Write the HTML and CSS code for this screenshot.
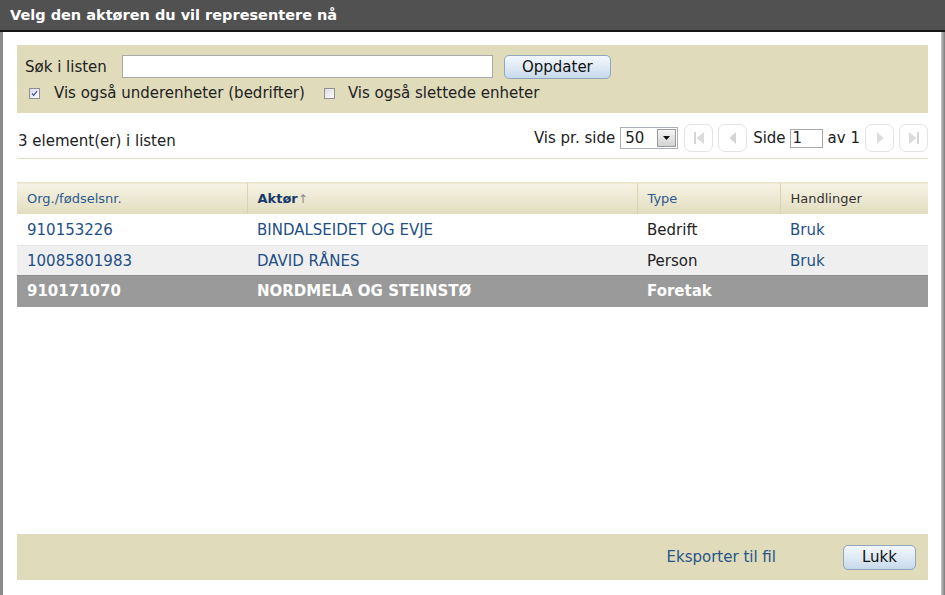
FILE: index.html
```html
<!DOCTYPE html>
<html lang="no">
<head>
<meta charset="utf-8">
<title>Velg aktør</title>
<link rel="stylesheet" href="styles.css">
</head>
<body>
<div class="window">
  <div class="titlebar">Velg den aktøren du vil representere nå</div>
  <div class="frame">
    <div class="edge-left"></div>
    <div class="dialog">
      <div class="filter">
        <div class="filter-row">
          <label class="search-label">Søk i listen</label>
          <input class="search-input" type="text">
          <button class="btn btn-update">Oppdater</button>
        </div>
        <div class="filter-row checks">
          <span class="check checked"><svg viewBox="0 0 11 11" width="11" height="11"><path d="M2.5 5.5 L4.5 7.8 L8.6 2.6" fill="none" stroke="#3b4fa8" stroke-width="1.4"/></svg></span>
          <span class="check-label">Vis også underenheter (bedrifter)</span>
          <span class="check second"></span>
          <span class="check-label">Vis også slettede enheter</span>
        </div>
      </div>

      <div class="pager-row">
        <span class="count">3 element(er) i listen</span>
        <div class="pager">
          <span class="pp-label">Vis pr. side</span>
          <span class="select"><span class="select-val">50</span><span class="select-btn"><svg viewBox="0 0 7 4" width="7" height="4"><path d="M0 0 H7 L3.5 4 Z" fill="#111"/></svg></span></span>
          <span class="pbtn"><svg viewBox="0 0 14 16" width="14" height="16"><rect x="2" y="2" width="2" height="12" fill="#d6d6d6"/><path d="M12 2 L4.5 8 L12 14 Z" fill="#dcdcdc"/></svg></span>
          <span class="pbtn"><svg viewBox="0 0 14 16" width="14" height="16"><path d="M10 2 L3.5 8 L10 14 Z" fill="#d4d4d4"/></svg></span>
          <span class="side">Side</span>
          <span class="page-input">1</span>
          <span class="av">av 1</span>
          <span class="pbtn"><svg viewBox="0 0 14 16" width="14" height="16"><path d="M4 2 L10.5 8 L4 14 Z" fill="#dcdcdc"/></svg></span>
          <span class="pbtn"><svg viewBox="0 0 14 16" width="14" height="16"><path d="M2 2 L9.5 8 L2 14 Z" fill="#dcdcdc"/><rect x="10" y="2" width="2" height="12" fill="#d6d6d6"/></svg></span>
        </div>
      </div>
      <div class="sep"></div>

      <div class="table-area">
        <table class="grid">
          <colgroup><col class="c1"><col class="c2"><col class="c3"><col class="c4"></colgroup>
          <thead>
            <tr>
              <th class="h-link">Org./fødselsnr.</th>
              <th class="h-sorted">Aktør<span class="arrow">↑</span></th>
              <th class="h-link">Type</th>
              <th class="h-plain">Handlinger</th>
            </tr>
          </thead>
          <tbody>
            <tr class="r1">
              <td class="link">910153226</td>
              <td class="link">BINDALSEIDET OG EVJE</td>
              <td>Bedrift</td>
              <td class="link">Bruk</td>
            </tr>
            <tr class="r2">
              <td class="link">10085801983</td>
              <td class="link">DAVID RÅNES</td>
              <td>Person</td>
              <td class="link">Bruk</td>
            </tr>
            <tr class="r3">
              <td>910171070</td>
              <td>NORDMELA OG STEINSTØ</td>
              <td>Foretak</td>
              <td></td>
            </tr>
          </tbody>
        </table>
      </div>

      <div class="footer">
        <span class="export">Eksporter til fil</span>
        <button class="btn btn-close">Lukk</button>
      </div>
    </div>
    <div class="edge-right"></div>
  </div>
</div>
</body>
</html>
```

FILE: styles.css
```css
html, body {
  margin: 0;
  padding: 0;
  background: #8c8c8c;
}
body {
  font-family: "DejaVu Sans", Verdana, sans-serif;
  color: #222;
}
.window {
  width: 945px;
  height: 595px;
  display: flex;
  flex-direction: column;
  overflow: hidden;
}
.titlebar {
  height: 30px;
  background: #515151;
  border-bottom: 2px solid #151515;
  color: #fff;
  font-weight: bold;
  font-size: 14.5px;
  line-height: 31px;
  padding-left: 10px;
  flex: none;
}
.frame {
  flex: 1;
  display: flex;
  min-height: 0;
}
.edge-left {
  width: 3px;
  background: #8a8a8a;
  flex: none;
}
.edge-right {
  width: 4px;
  background: linear-gradient(to right, #c8c8c8, #7a7a7a);
  flex: none;
}
.dialog {
  flex: 1;
  background: #fff;
  padding: 13px 13px 15px 14px;
  display: flex;
  flex-direction: column;
  min-width: 0;
}
.filter {
  background: #dfdbbb;
  height: 68px;
  box-sizing: border-box;
  padding: 9px 0 0 8px;
  display: flex;
  flex-direction: column;
  gap: 3px;
}
.filter-row {
  display: flex;
  align-items: center;
  font-size: 15px;
  white-space: nowrap;
}
.search-label {
  flex: none;
  margin-right: 15px;
}
.search-input {
  width: 371px;
  height: 23px;
  box-sizing: border-box;
  border: 1px solid #a9a9a9;
  background: #fff;
  margin: 0 11px 0 0;
  padding: 0;
  flex: none;
}
.btn {
  font-family: "DejaVu Sans", Verdana, sans-serif;
  font-size: 15px;
  color: #111;
  border: 1px solid #8ea7bf;
  border-radius: 5px;
  background: linear-gradient(to bottom, #f2f7fc 0%, #dfeaf5 50%, #c7d9ea 100%);
  box-sizing: border-box;
  padding: 0;
  cursor: pointer;
  flex: none;
}
.btn-update {
  width: 107px;
  height: 24px;
  margin-top: 1px;
}
.checks {
  height: 22px;
  padding-left: 4px;
}
.check {
  width: 11px;
  height: 11px;
  box-sizing: border-box;
  border: 1px solid #8f8f8f;
  background: linear-gradient(to bottom right, #dcdcdc, #fbfbfb);
  display: inline-flex;
  align-items: center;
  justify-content: center;
  margin-right: 14px;
  flex: none;
}
.check svg {
  width: 9px;
  height: 9px;
}
.check.checked {
  background: linear-gradient(to bottom right, #d6dbe6, #fafbfd);
}
.check.second {
  margin-left: 19px;
  margin-right: 13px;
}
.pager-row {
  display: flex;
  justify-content: space-between;
  align-items: center;
  height: 28px;
  margin-top: 11px;
  font-size: 15px;
  white-space: nowrap;
}
.count {
  padding-left: 1px;
  margin-top: 5px;
}
.pager {
  display: flex;
  align-items: center;
}
.pp-label {
  margin-right: 5px;
}
.select {
  display: inline-flex;
  align-items: center;
  width: 58px;
  height: 22px;
  box-sizing: border-box;
  border: 1px solid #a9b0b8;
  background: #fff;
  margin-right: 6px;
}
.select-val {
  flex: 1;
  padding-left: 4px;
}
.select-btn {
  width: 19px;
  height: 18px;
  margin-right: 1px;
  box-sizing: border-box;
  border: 1px solid #9a9a9a;
  background: linear-gradient(to bottom, #f5f5f5, #d2d2d2);
  display: inline-flex;
  align-items: center;
  justify-content: center;
}
.pbtn {
  width: 29px;
  height: 28px;
  box-sizing: border-box;
  border: 1px solid #e3e3e3;
  border-radius: 7px;
  background: #fff;
  display: inline-flex;
  align-items: center;
  justify-content: center;
  margin-right: 5px;
}
.pbtn:last-child {
  margin-right: 0;
}
.side {
  margin: 0 4px 0 1px;
}
.page-input {
  width: 33px;
  height: 19px;
  box-sizing: border-box;
  border: 1px solid #a9a9a9;
  line-height: 17px;
  padding-left: 2px;
  margin-right: 5px;
}
.av {
  margin-right: 5px;
}
.sep {
  height: 1px;
  background: #e4e0c8;
  margin-top: 6px;
}
.table-area {
  flex: 1;
  padding-top: 23px;
}
.grid {
  width: 911px;
  border-collapse: collapse;
  table-layout: fixed;
}
.c1 { width: 230px; }
.c2 { width: 390px; }
.c3 { width: 143px; }
.c4 { width: 148px; }
.grid th {
  height: 31px;
  box-sizing: border-box;
  text-align: left;
  font-size: 13px;
  font-weight: normal;
  padding: 0 0 0 10px;
  background: linear-gradient(to bottom, #f6f3e5 0%, #ece8d2 50%, #e2ddbe 100%);
  border-top: 1px solid #e8e3c9;
  border-left: 1px solid #d9d3b4;
}
.grid th:first-child {
  border-left: none;
}
.h-link {
  color: #2c5a8e;
}
.h-sorted {
  color: #1a3a6c;
  font-weight: bold !important;
}
.arrow {
  color: #8a8a8a;
  font-weight: normal;
  font-size: 12px;
}
.h-plain {
  color: #333;
}
.grid td {
  font-size: 15px;
  height: 31px;
  padding: 0 0 0 10px;
  box-sizing: border-box;
  white-space: nowrap;
  color: #222;
}
.grid td.link {
  color: #1f4f87;
}
.r1 td { background: #fff; height: 32px; padding-top: 2px; }
.r2 td { background: #efefef; border-top: 1px solid #e6e6e6; height: 30px; }
.r3 td {
  background: #9a9a9a;
  color: #fff;
  font-weight: bold;
  height: 31px;
  border-top: 1px solid #8e8e8e;
}
.footer {
  height: 46px;
  background: #dfdbbb;
  display: flex;
  align-items: center;
  justify-content: flex-end;
  padding-right: 12px;
}
.export {
  font-size: 15px;
  color: #285588;
  margin-right: 67px;
}
.btn-close {
  width: 73px;
  height: 25px;
}
```
